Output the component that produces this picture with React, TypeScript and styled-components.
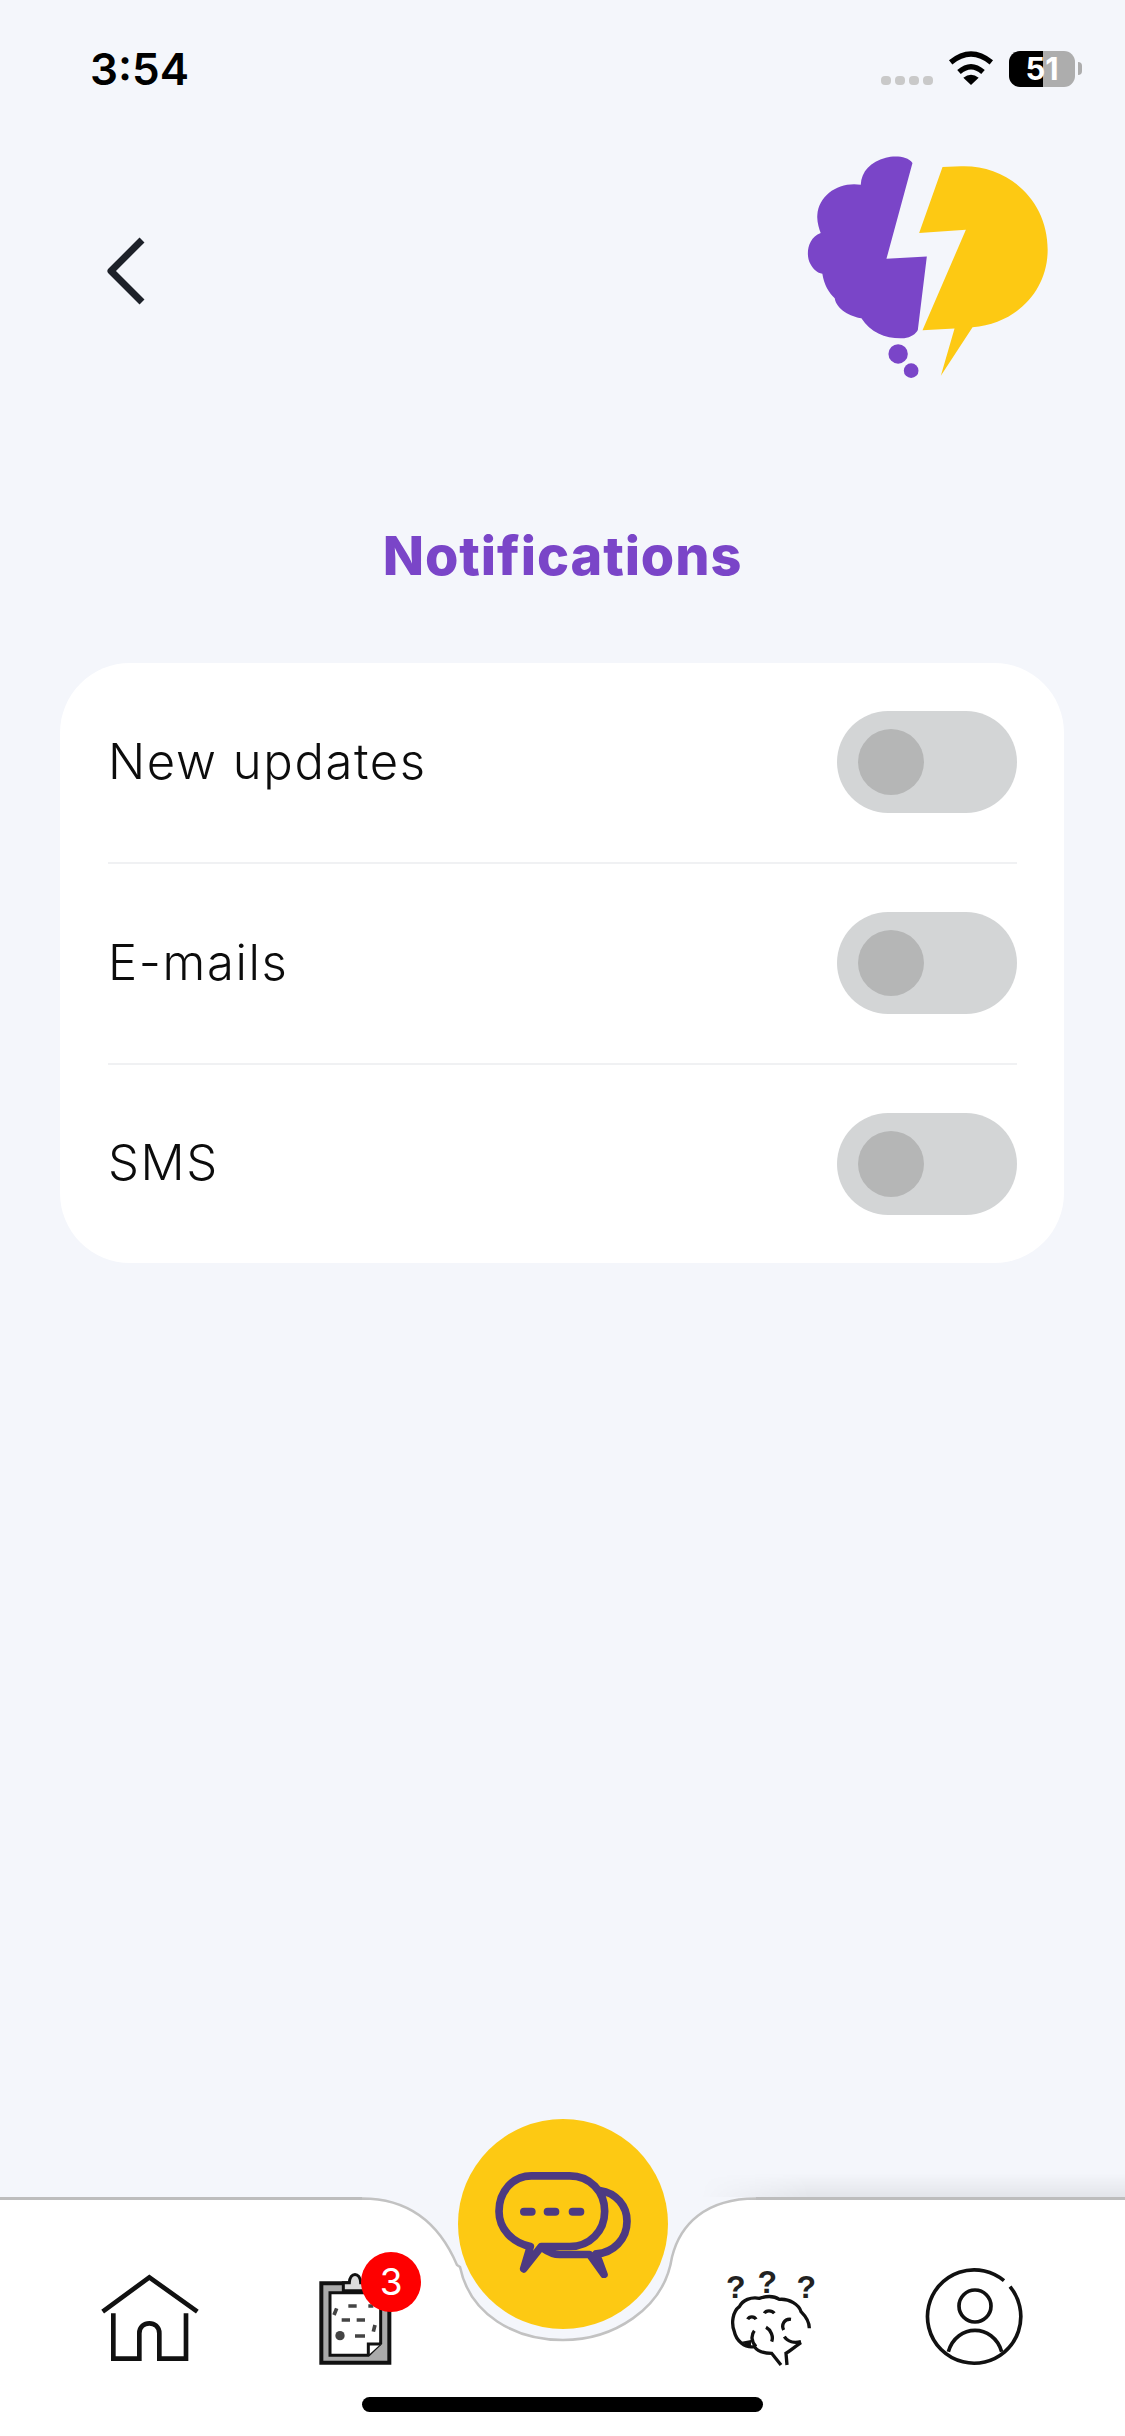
import React from "react";
import styled, { createGlobalStyle } from "styled-components";

const Global = createGlobalStyle`
  html, body { margin: 0; padding: 0; background: #f4f6fb; }
  * { box-sizing: border-box; }
`;

const Screen = styled.div`
  width: 1125px;
  height: 2436px;
  background: #f4f6fb;
  display: flex;
  flex-direction: column;
  overflow: hidden;
  font-family: Inter, "Liberation Sans", sans-serif;
`;

const StatusBar = styled.div`
  height: 153px;
  padding: 51px 43px 0 90px;
  display: flex;
  justify-content: space-between;
  align-items: flex-start;
`;

const Clock = styled.div`
  font-size: 44px;
  font-weight: 600;
  line-height: 36px;
  color: #000;
`;

const StatusIcons = styled.div`
  display: flex;
  align-items: flex-start;
`;

const SignalDots = styled.div`
  display: flex;
  gap: 4px;
  margin-top: 25px;
  margin-right: 15px;
`;

const SignalDot = styled.span`
  width: 10px;
  height: 9px;
  border-radius: 4px;
  background: #c9c9c9;
`;

const Wifi = styled.svg`
  width: 46px;
  height: 34px;
  margin-right: 15px;
`;

const Battery = styled.div`
  position: relative;
  width: 66px;
  height: 36px;
  border-radius: 11px;
  overflow: hidden;
  background: linear-gradient(to right, #000 0 34px, #adadad 34px);
  color: #fff;
  font-size: 31px;
  font-weight: 700;
  line-height: 36px;
  text-align: center;
`;

const BatteryNub = styled.span`
  width: 4px;
  height: 13px;
  margin: 11px 0 0 3px;
  border-radius: 0 4px 4px 0;
  background: #adadad;
`;

const Header = styled.header`
  height: 227px;
  padding: 0 74px 0 106px;
  display: flex;
  justify-content: space-between;
  align-items: flex-start;
`;

const BackIcon = styled.svg`
  width: 40px;
  height: 68px;
  margin-top: 84px;
`;

const Logo = styled.svg`
  width: 247px;
  height: 227px;
`;

const Title = styled.h1`
  margin: 146px 0 0;
  height: 60px;
  line-height: 60px;
  text-align: center;
  font-size: 54px;
  font-weight: 800;
  letter-spacing: 0.9px;
  color: #7a45c8;
`;

const Card = styled.section`
  margin: 77px 61px 0 60px;
  padding: 0 47px 0 48px;
  height: 600px;
  background: #fff;
  border-radius: 70px;
`;

const Row = styled.div<{ $last?: boolean }>`
  height: ${(p) => (p.$last ? 198 : 201)}px;
  display: flex;
  align-items: center;
  justify-content: space-between;
  border-bottom: ${(p) => (p.$last ? "none" : "2px solid #f0f1f3")};
`;

const RowLabel = styled.span`
  font-size: 49px;
  font-weight: 300;
  letter-spacing: 1.6px;
  line-height: 60px;
  margin-top: -2px;
  color: #0c0c0c;
`;

const Toggle = styled.div`
  width: 180px;
  height: 102px;
  margin-top: -1px;
  padding: 18px 21px;
  border-radius: 51px;
  background: #d3d5d6;
`;

const Knob = styled.div`
  width: 66px;
  height: 66px;
  border-radius: 50%;
  background: #b5b6b6;
`;

const Spacer = styled.div`
  flex: 1;
`;

const TabBar = styled.nav`
  position: relative;
  height: 239px;
  padding: 65px 47px 0;
  background: #fff;
  border-top: 3px solid #bdbdbd;
  display: grid;
  grid-template-columns: repeat(5, 1fr);
  align-items: start;

  &::before {
    content: "";
    position: absolute;
    top: -27px;
    left: 700px;
    right: 0;
    height: 24px;
    background: linear-gradient(to bottom, rgba(0, 0, 0, 0), rgba(0, 0, 0, 0.065));
    -webkit-mask-image: linear-gradient(to right, transparent 0, #000 110px);
    mask-image: linear-gradient(to right, transparent 0, #000 110px);
  }
`;

const Notch = styled.svg`
  position: absolute;
  top: -3px;
  left: 0;
  width: 1125px;
  height: 239px;
`;

const ChatButton = styled.button`
  position: absolute;
  top: -81px;
  left: 458px;
  width: 210px;
  height: 210px;
  padding: 0;
  border: none;
  border-radius: 50%;
  background: #fdc913;
  display: flex;
  align-items: center;
  justify-content: center;
`;

const ChatIcon = styled.svg`
  width: 140px;
  height: 107px;
`;

const TabCell = styled.div`
  display: flex;
  justify-content: center;
`;

const TabIconWrap = styled.div`
  position: relative;
  width: 120px;
  height: 104px;
`;

const TabIcon = styled.svg`
  display: block;
  width: 120px;
  height: 104px;
`;

const Badge = styled.span`
  position: absolute;
  top: -13px;
  left: 65px;
  width: 60px;
  height: 60px;
  border-radius: 50%;
  background: #fe0000;
  color: #fff;
  font-size: 37px;
  font-weight: 400;
  line-height: 60px;
  text-align: center;
`;

const HomeIndicator = styled.div`
  position: absolute;
  left: 362px;
  top: 197px;
  width: 401px;
  height: 15px;
  border-radius: 8px;
  background: #000;
`;

const rows = ["New updates", "E-mails", "SMS"];

export default function App() {
  return (
    <Screen>
      <Global />
      <StatusBar>
        <Clock>3:54</Clock>
        <StatusIcons>
          <SignalDots>
            <SignalDot />
            <SignalDot />
            <SignalDot />
            <SignalDot />
          </SignalDots>
          <Wifi viewBox="264 64 138 102">
            <path d="M272 98 Q333 48 394 98" fill="none" stroke="#000" strokeWidth="16" />
            <path d="M297 127 Q333 95 369 127" fill="none" stroke="#000" strokeWidth="16" />
            <path d="M333 166 L310 144 Q333 126 356 144 Z" fill="#000" />
          </Wifi>
          <Battery>51</Battery>
          <BatteryNub />
        </StatusIcons>
      </StatusBar>

      <Header>
        <BackIcon viewBox="0 0 40 68" fill="none">
          <path d="M36 3 L5 34 L36 65" stroke="#1d2129" strokeWidth="7" strokeLinejoin="round" />
        </BackIcon>
        <Logo viewBox="100 70 740 680">
          <path
            fill="#7a45c8"
            d="M425 100 C410 78 370 78 345 84 C300 95 272 125 270 165 C205 155 145 195 140 255 C138 275 145 295 150 310 C110 325 105 375 118 400 C128 420 140 428 155 432 C160 465 175 490 192 505 C198 540 240 560 272 565 C300 610 350 628 400 625 C420 622 435 612 441 600 L468 380 L347 387 Z"
          />
          <path
            fill="#fdc913"
            d="M515 112 L445 310 L585 300 L455 601 L551 596 L510 737 L605 592 C740 580 830 480 830 360 C830 210 710 105 570 110 Z"
          />
          <circle cx="382" cy="672" r="29" fill="#7a45c8" />
          <circle cx="421" cy="722" r="22" fill="#7a45c8" />
        </Logo>
      </Header>

      <Title>Notifications</Title>

      <Card>
        {rows.map((label, i) => (
          <Row key={label} $last={i === rows.length - 1}>
            <RowLabel>{label}</RowLabel>
            <Toggle>
              <Knob />
            </Toggle>
          </Row>
        ))}
      </Card>

      <Spacer />

      <TabBar>
        <Notch viewBox="0 0 1125 239" fill="none">
          <path
            fill="#f4f6fb"
            d="M362 -2 L362 1.5 C410 1.5 440 28 457 68 L460 70 C470 118 515 143 563 143 C612 143 664 113 672 60 C680 28 705 1.5 756 1.5 L756 -2 Z"
          />
          <path
            stroke="#c2c2c2"
            strokeWidth="2.5"
            d="M362 1.5 C410 1.5 440 28 457 68 L460 70 C470 118 515 143 563 143 C612 143 664 113 672 60 C680 28 705 1.5 756 1.5"
          />
        </Notch>

        <TabCell>
          <TabIconWrap>
            <TabIcon viewBox="90 195 360 312" fill="none" stroke="#111" strokeWidth="14">
              <path d="M128 335 L268 232 L412 335" />
              <path d="M160 340 V476 H238 V400 C238 360 298 360 298 400 V476 H378 V340" />
            </TabIcon>
          </TabIconWrap>
        </TabCell>

        <TabCell>
          <TabIconWrap>
            <TabIcon viewBox="708 195 360 312" fill="none" stroke="#111" strokeWidth="9">
              <path d="M784 250 H988 V488 H784 Z" fill="#aaa" strokeWidth="12" />
              <path d="M810 278 H962 V430 L925 466 H810 Z" fill="#fff" />
              <path d="M925 466 V432 H962" fill="#fff" />
              <path d="M850 272 V248 H868 C870 215 900 215 902 248 H915 V272 Z" fill="#ddd" />
              <path d="M830 325 L822 345 M865 318 H890 M925 318 H940 M845 360 H870 M890 360 H915 M945 375 L940 395 M885 408 H915" strokeWidth="11" stroke="#444" />
              <circle cx="840" cy="407" r="14" fill="#444" stroke="none" />
            </TabIcon>
            <Badge>3</Badge>
          </TabIconWrap>
        </TabCell>

        <TabCell />

        <TabCell>
          <TabIconWrap>
            <TabIcon viewBox="24 75 360 312" fill="none" stroke="#111" strokeWidth="10">
              <path d="M240 375 L212 340 C190 340 170 335 160 320 C130 325 105 300 100 275 C90 250 95 215 115 200 C125 180 150 170 175 175 C190 170 215 165 235 178 C265 175 295 195 300 215 C315 230 325 250 325 265" />
              <path d="M300 308 C275 325 265 335 255 340 L258 375" />
              <path d="M140 238 C145 228 160 228 165 238 M190 220 C195 210 212 210 220 220 M270 238 C250 235 240 255 248 270 M195 262 C210 270 218 290 212 305 M160 272 C150 285 150 305 165 320 M250 290 C260 305 280 310 300 305" />
              <path d="M122 305 L150 300 L150 325 Z" fill="#111" stroke="none" />
              <g fill="#222" stroke="none" fontFamily="'Liberation Sans', sans-serif" fontWeight="700" fontSize="96" textAnchor="middle">
                <text x="104" y="174">?</text>
                <text x="199" y="160">?</text>
                <text x="316" y="174">?</text>
              </g>
            </TabIcon>
          </TabIconWrap>
        </TabCell>

        <TabCell>
          <TabIconWrap>
            <TabIcon viewBox="645 75 360 312" fill="none" stroke="#111" strokeWidth="11">
              <path d="M912 122 A140 140 0 1 0 930 140" />
              <circle cx="825" cy="198" r="48" />
              <path d="M745 335 C770 250 880 250 905 335" />
            </TabIcon>
          </TabIconWrap>
        </TabCell>

        <ChatButton aria-label="Chat">
          <ChatIcon viewBox="220 210 420 320" fill="none" stroke="#4d3a82" strokeWidth="23">
            <path d="M540 268 C590 275 622 315 622 360 C622 415 580 455 530 458 L553 520 L510 460 H420 C400 460 385 452 368 440" strokeLinejoin="round" />
            <path d="M335 224 H450 C510 224 555 270 555 330 C555 390 510 436 450 436 H365 L312 503 L332 436 C280 425 238 385 238 330 C238 270 280 224 335 224 Z" strokeLinejoin="round" />
            <path d="M313 332 H336 M384 332 H407 M459 332 H482" strokeWidth="24" strokeLinecap="round" />
          </ChatIcon>
        </ChatButton>

        <HomeIndicator />
      </TabBar>
    </Screen>
  );
}
